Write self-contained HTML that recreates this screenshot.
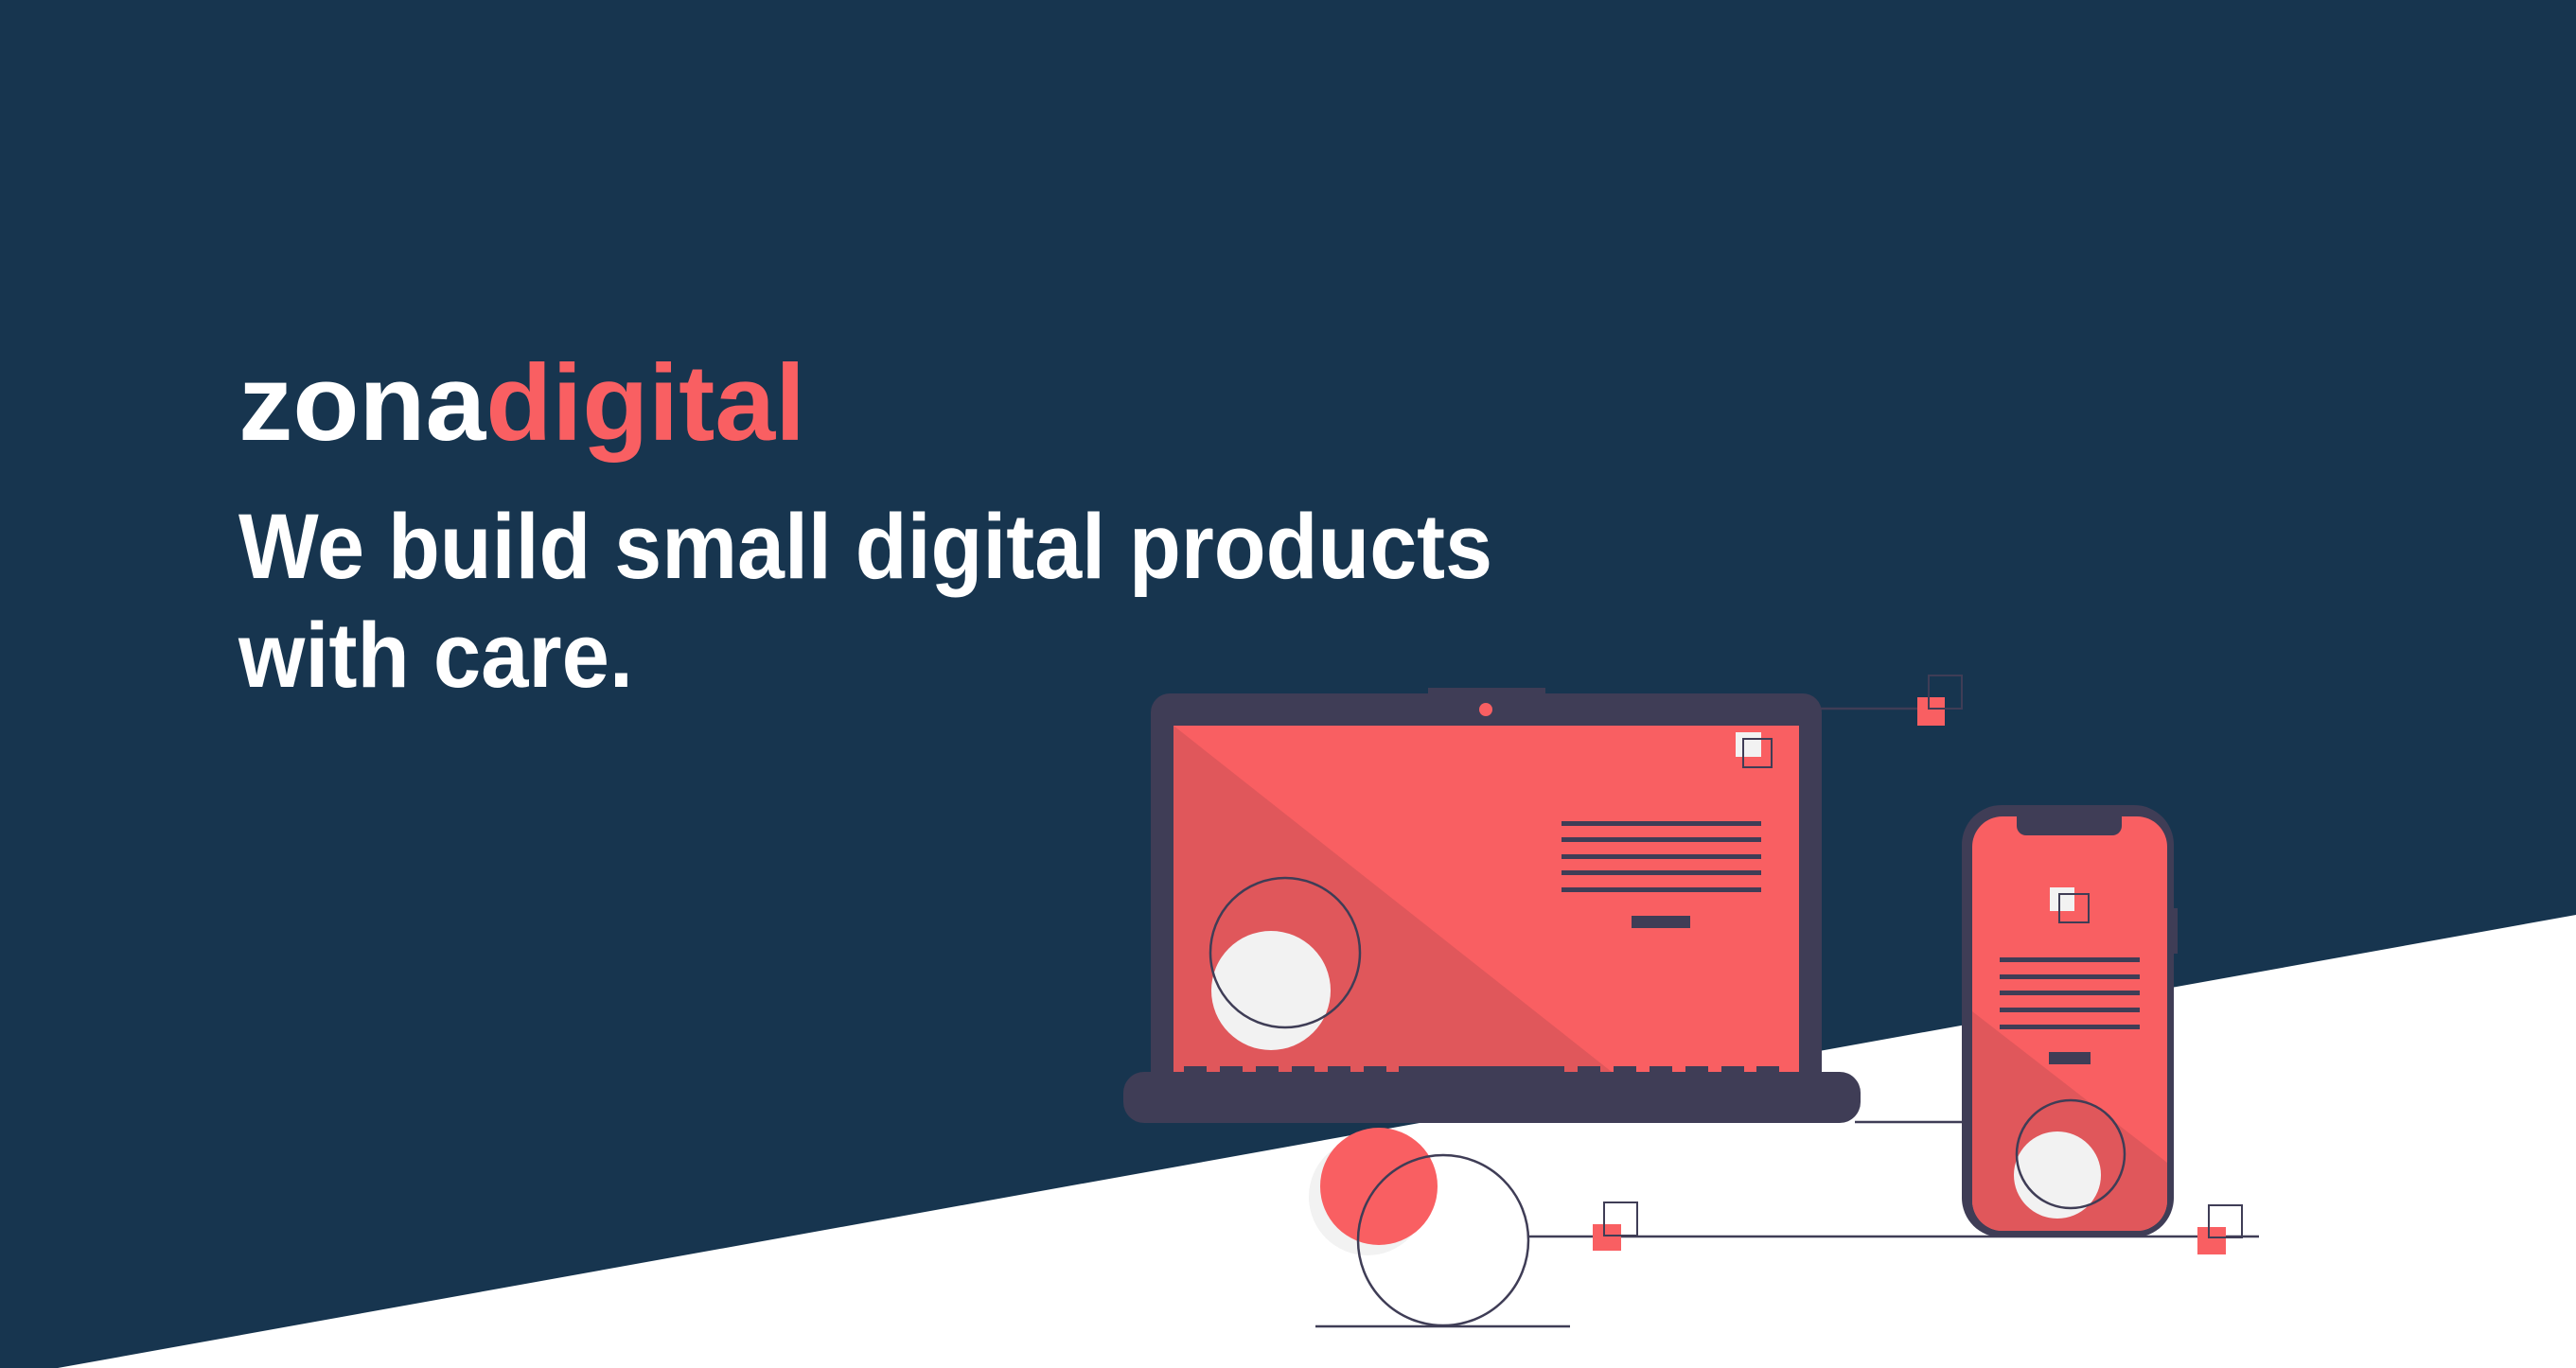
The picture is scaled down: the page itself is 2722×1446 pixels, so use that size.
<!DOCTYPE html>
<html><head><meta charset="utf-8"><style>html,body{margin:0;padding:0;background:#17354f}svg{display:block}</style></head>
<body>
<svg width="2722" height="1446" viewBox="0 0 2722 1446" xmlns="http://www.w3.org/2000/svg">
<rect width="2722" height="1446" fill="#17354f"/>
<polygon points="61,1446 2722,967 2722,1446" fill="#ffffff"/>
<g font-family="Liberation Sans, sans-serif" font-weight="bold">
<text x="252" y="465" font-size="114" textLength="599" lengthAdjust="spacingAndGlyphs"><tspan fill="#ffffff">zona</tspan><tspan fill="#f95f62">digital</tspan></text>
<text x="252" y="611" font-size="97" fill="#fff" textLength="1325" lengthAdjust="spacingAndGlyphs">We build small digital products</text>
<text x="252" y="726" font-size="97" fill="#fff" textLength="417" lengthAdjust="spacingAndGlyphs">with care.</text>
</g>
<g stroke="#3f3d56" stroke-width="2.5" fill="none">
<line x1="1920" y1="749" x2="2038" y2="749"/>
<line x1="1960" y1="1186" x2="2080" y2="1186"/>
<line x1="1615" y1="1307" x2="2387" y2="1307"/>
<line x1="1390" y1="1402" x2="1659" y2="1402"/>
</g>
<rect x="1509" y="727" width="124" height="10" fill="#3f3d56"/>
<rect x="1216" y="733" width="709" height="420" rx="20" fill="#3f3d56"/>
<rect x="1240" y="767" width="661" height="366" fill="#f95f62"/>
<polygon points="1240,767 1703,1133 1240,1133" fill="#e0575b"/>
<circle cx="1343" cy="1047" r="63" fill="#f2f2f2"/>
<circle cx="1358" cy="1007" r="79" fill="none" stroke="#3f3d56" stroke-width="2.5"/>
<rect x="1834" y="774" width="27" height="26" fill="#f2f2f2"/>
<rect x="1842" y="781" width="30" height="30" fill="none" stroke="#3f3d56" stroke-width="2"/>
<g fill="#3f3d56">
<rect x="1650" y="868" width="211" height="5"/><rect x="1650" y="885" width="211" height="5"/><rect x="1650" y="903" width="211" height="5"/><rect x="1650" y="920" width="211" height="5"/><rect x="1650" y="938" width="211" height="5"/>
<rect x="1724" y="968" width="62" height="13"/>
<rect x="1251" y="1127" width="24" height="6"/><rect x="1289" y="1127" width="24" height="6"/><rect x="1327" y="1127" width="24" height="6"/><rect x="1365" y="1127" width="24" height="6"/><rect x="1403" y="1127" width="24" height="6"/><rect x="1441" y="1127" width="24" height="6"/><rect x="1478" y="1127" width="175" height="6"/><rect x="1667" y="1127" width="24" height="6"/><rect x="1705" y="1127" width="24" height="6"/><rect x="1743" y="1127" width="24" height="6"/><rect x="1781" y="1127" width="24" height="6"/><rect x="1819" y="1127" width="24" height="6"/><rect x="1856" y="1127" width="24" height="6"/>
</g>
<circle cx="1570" cy="750" r="7" fill="#f95f62"/>
<rect x="1187" y="1133" width="779" height="54" rx="22" fill="#3f3d56"/>
<rect x="2026" y="737" width="29" height="30" fill="#f95f62"/>
<rect x="2038" y="714" width="35" height="35" fill="none" stroke="#3f3d56" stroke-width="2"/>
<rect x="1683" y="1294" width="30" height="28" fill="#f95f62"/>
<rect x="1695" y="1271" width="35" height="35" fill="none" stroke="#3f3d56" stroke-width="2"/>
<rect x="2322" y="1297" width="30" height="29" fill="#f95f62"/>
<rect x="2334" y="1274" width="35" height="34" fill="none" stroke="#3f3d56" stroke-width="2"/>
<circle cx="1445" cy="1265" r="62" fill="#f2f2f2"/>
<circle cx="1457" cy="1254" r="62" fill="#f95f62"/>
<circle cx="1525" cy="1311" r="90" fill="none" stroke="#3f3d56" stroke-width="2.5"/>
<rect x="2295" y="960" width="6" height="48" fill="#3f3d56"/>
<rect x="2073" y="851" width="224" height="457" rx="42" fill="#3f3d56"/>
<clipPath id="ps"><rect x="2084" y="863" width="206" height="438" rx="32"/></clipPath>
<g clip-path="url(#ps)">
<rect x="2084" y="863" width="206" height="438" fill="#f95f62"/>
<polygon points="2084,1069 2290,1229 2290,1301 2084,1301" fill="#e0575b"/>
</g>
<path d="M2131 863 H2242 V873 a10 10 0 0 1 -10 10 H2141 a10 10 0 0 1 -10 -10 Z" fill="#3f3d56"/>
<rect x="2166" y="938" width="26" height="25" fill="#f2f2f2"/>
<rect x="2176" y="945" width="31" height="30" fill="none" stroke="#3f3d56" stroke-width="2"/>
<g fill="#3f3d56">
<rect x="2113" y="1012" width="148" height="5"/><rect x="2113" y="1030" width="148" height="5"/><rect x="2113" y="1047" width="148" height="5"/><rect x="2113" y="1065" width="148" height="5"/><rect x="2113" y="1083" width="148" height="5"/>
<rect x="2165" y="1112" width="44" height="13"/>
</g>
<circle cx="2174" cy="1242" r="46" fill="#f2f2f2"/>
<circle cx="2188" cy="1220" r="57" fill="none" stroke="#3f3d56" stroke-width="2.5"/>
</svg>
</body></html>
